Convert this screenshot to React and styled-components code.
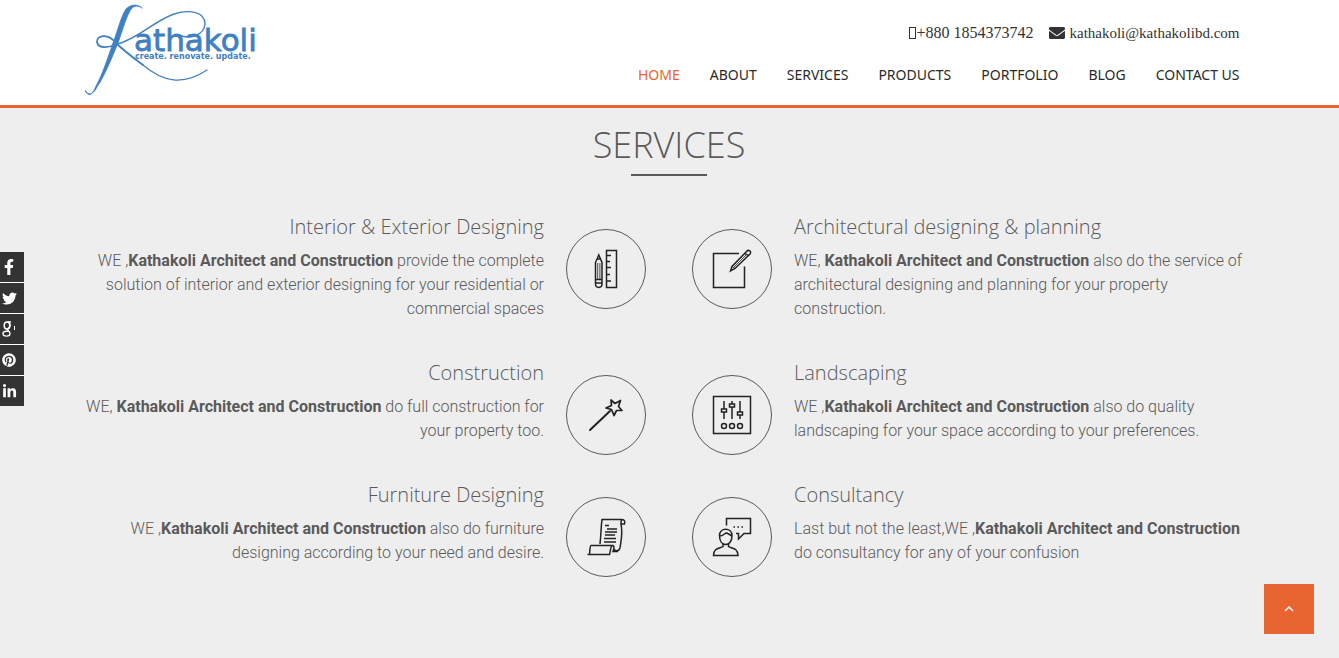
import React from "react";
import styled, { createGlobalStyle } from "styled-components";
import { FaFacebookF, FaTwitter, FaPinterest, FaLinkedinIn, FaEnvelope } from "react-icons/fa";

const colors = {
  accent: "#e86430",
  ink: "#333333",
  text: "#5a5a5a",
  page: "#eeeeee",
  brand: "#3f80c3",
};

const GlobalStyle = createGlobalStyle`
  *, *::before, *::after { box-sizing: border-box; }
  body {
    margin: 0;
    background: ${colors.page};
    color: ${colors.text};
    font-family: Roboto, "Liberation Sans", sans-serif;
    font-size: 16px;
    line-height: 24px;
  }
`;

const Header = styled.header`
  background: #ffffff;
  border-bottom: 3px solid ${colors.accent};
`;

const HeaderInner = styled.div`
  display: flex;
  justify-content: space-between;
  align-items: flex-start;
  max-width: 1170px;
  min-height: 105px;
  margin: 0 auto;
  padding-right: 15px;
`;

const LogoLink = styled.a`
  display: block;
  color: ${colors.brand};
`;

const LogoSvg = styled.svg`
  display: block;
`;

const HeaderRight = styled.div`
  display: flex;
  flex-direction: column;
  align-items: flex-end;
  gap: 18px;
  padding-top: 21px;
`;

const ContactList = styled.address`
  display: flex;
  gap: 16px;
  font: normal 16px/24px "Liberation Serif", serif;
`;

const ContactLink = styled.a`
  display: inline-flex;
  align-items: center;
  gap: ${(p) => p.$gap}px;
  color: ${colors.ink};
  font-size: ${(p) => p.$size}px;
  text-decoration: none;
`;

const PhoneGlyph = styled.span`
  width: 7px;
  height: 12px;
  border: 1px solid ${colors.ink};
`;

const Nav = styled.nav`
  display: flex;
  flex-wrap: wrap;
  gap: 30px;
`;

const NavLink = styled.a`
  color: ${(p) => (p.$active ? colors.accent : "#2a2a2a")};
  font: 400 14px/24px "Noto Sans", sans-serif;
  text-decoration: none;
`;

const Services = styled.main`
  max-width: 1171px;
  margin: 0 auto;
  padding: 16px 1px 40px 0;
`;

const Title = styled.h1`
  margin: 0;
  color: ${colors.text};
  font: 300 36px/42px "Open Sans", sans-serif;
  text-align: center;

  &::after {
    content: "";
    display: block;
    width: 76px;
    height: 2px;
    margin: 8px auto 0;
    background: ${colors.text};
  }
`;

const ServiceGrid = styled.div`
  display: grid;
  grid-template-columns: repeat(2, minmax(0, 1fr));
  gap: 40px 46px;
  margin-top: 39px;
`;

const ServiceItem = styled.article`
  display: flex;
  flex-direction: ${(p) => (p.$mirrored ? "row-reverse" : "row")};
  align-items: flex-start;
  gap: 22px;
  text-align: ${(p) => (p.$mirrored ? "right" : "left")};
`;

const IconCircle = styled.div`
  display: flex;
  flex: none;
  align-items: center;
  justify-content: center;
  width: 80px;
  height: 80px;
  margin: 14px 0 -46px;
  border: 1px solid ${colors.text};
  border-radius: 50%;
`;

const LineIcon = styled.svg`
  width: 40px;
  height: 40px;
  fill: none;
  stroke: #222222;
  stroke-width: 1.5;
`;

const ServiceText = styled.div`
  flex: 1;
  min-width: 0;
`;

const ServiceHeading = styled.h2`
  margin: 0 0 10px;
  font: 300 20px/24px "Open Sans", sans-serif;
`;

const ServiceCopy = styled.p`
  margin: 0;
  font-weight: 300;

  strong {
    font-weight: 700;
  }
`;

const SocialBar = styled.nav`
  position: fixed;
  top: 252px;
  left: 0;
  display: flex;
  flex-direction: column;
  gap: 1px;
  background: #ffffff;
`;

const SocialLink = styled.a`
  display: flex;
  align-items: center;
  justify-content: center;
  width: 24px;
  height: 30px;
  padding-right: 6px;
  background: ${colors.ink};
  color: #ffffff;
`;

const TopButton = styled.button`
  position: fixed;
  right: 25px;
  bottom: 24px;
  display: flex;
  align-items: center;
  justify-content: center;
  width: 50px;
  height: 50px;
  padding: 0;
  border: 0;
  background: ${colors.accent};
  color: #ffffff;
  cursor: pointer;
`;

function Logo() {
  return (
    <LogoSvg width="174" height="100" viewBox="0 0 174 100" role="img" aria-label="Kathakoli">
      <g fill="none" stroke="currentColor" strokeLinecap="round">
        <path
          fill="currentColor"
          strokeWidth="0.8"
          d="M57 8C53 4 46 4 41 9C36 16 33 30 28 43C23 57 17 76 11 86C7 96 3 97 0 90C2 94 7 97 12 87C18 79 27 58 33 43C38 29 42 14 47 8C51 5 55 6 57 8Z"
        />
        <path strokeWidth="1.8" d="M32 44C24 48 13 49 12 42C12 35 23 33 31 43C39 51 50 59 58 65" />
        <path strokeWidth="1.4" d="M32 44C51 40 69 21 89 14C105 9 120 12 120 24C119 35 105 40 94 35" />
        <path strokeWidth="1.2" d="M58 65C78 82 98 86 122 70" />
      </g>
      <g fill="currentColor" fontFamily="DejaVu Sans, sans-serif">
        <text x="49" y="51" fontSize="31" stroke="currentColor" strokeWidth="0.8">athakoli</text>
        <text x="50" y="59" fontSize="8" fontWeight="700">create. renovate. update.</text>
      </g>
    </LogoSvg>
  );
}

const PencilRuler = () => (
  <LineIcon viewBox="0 0 40 40" aria-hidden="true">
    <path d="M20.500 1.5H30.500V38.5H20.500ZM21 6.5h4M21 12.5h3M21 18.5h4M21 25.5h3M21 32h4" />
    <path d="M9.500 13.5L12.800 6L16 13.5V35C16 39.500 9.500 39.500 9.500 35ZM9.500 30.500h7M9.500 34h7M11 10h4" />
    <path strokeWidth="0.8" d="M11.700 14v16M13.900 14v16" />
  </LineIcon>
);

const DrawSquare = () => (
  <LineIcon viewBox="0 0 40 40" aria-hidden="true">
    <path d="M27 4.500H1.500V38.500H32.500V17.500" />
    <path d="M18.500 22L20 17.500L34.500 2.500C36.500 0 40 2.500 38 5L23 19.500ZM33 4L36.500 7" />
    <path strokeWidth="0.8" d="M20 17.500L23 19.500M22 18L34 6" />
  </LineIcon>
);

const Wand = () => (
  <LineIcon viewBox="0 0 40 40" aria-hidden="true">
    <path strokeWidth="2" strokeLinecap="round" d="M4 35L24 16" />
    <path strokeWidth="1.7" strokeLinejoin="round" d="M25 5L29 8.500L34.500 5.500L32.500 11.500L36 15.500H30.500L28 20.500L25.500 14.500L20 13L25.500 10.500Z" />
  </LineIcon>
);

const Sliders = () => (
  <LineIcon viewBox="0 0 40 40" aria-hidden="true">
    <path d="M1.500 1.500H38.500V38.500H1.500ZM12 6V14M12 17V24M20 6V9M20 12V24M28 6V17M28 20V24M9.500 14h5v3h-5ZM17.500 9h5v3h-5ZM25.500 17h5v3h-5Z" />
    <circle cx="12" cy="31" r="2.500" />
    <circle cx="20" cy="31" r="2.500" />
    <circle cx="28" cy="31" r="2.500" />
  </LineIcon>
);

const Scroll = () => (
  <LineIcon viewBox="0 0 40 40" aria-hidden="true">
    <path d="M14 27C15 18 15 10 16 2.500H36C39 2.500 39 5 38.500 7H35C35 5 35 3 36 2.500M35 7C37 17 35 24 34 31C33 34.500 29 34.500 28 32" />
    <path d="M1.500 37.500H23.500C24.500 34 24.500 30 26 28.500H5C3.500 29.500 4 34 3.500 37.500M26 28.500C29 28.500 28 32 27 34.500H32" />
    <path d="M19 8.500h4M21 12h10M19 15h12M19 18h10M18 21.500h12M18 25h12" />
  </LineIcon>
);

const Consult = () => (
  <LineIcon viewBox="0 0 40 40" aria-hidden="true">
    <path d="M14.500 8.500V1.500H38.500V16.500H32L26.500 22V16.500H24" />
    <path d="M7.500 18.500C7.500 10 20 10 20 18.500C20 24.500 17 27.500 13.800 27.500C10 27.500 7.500 24 7.500 18.500ZM7.500 19C12 19 12 16 15 16L20 19" />
    <path d="M11 26.500V29.500C8 31.500 1.500 30.500 1.500 38.500H26C26 30.500 19 31.500 16.500 29.500V26.500" />
    <path strokeDasharray="1.5 2.500" d="M21.500 10h10" />
  </LineIcon>
);

const GooglePlus = () => (
  <svg width="14" height="16" viewBox="0 0 14 16" fill="none" stroke="currentColor" aria-hidden="true">
    <ellipse cx="5" cy="4.500" rx="2.800" ry="3.500" strokeWidth="1.500" />
    <path strokeWidth="1.400" d="M5.500 1H9M7 1.500C9 4 8 6 6 7.500C4 9 8 10 8 12.500C8 16 1 16 1 12.500C1 10.500 4 10 6.500 10" />
    <path strokeWidth="1" d="M12.500 5V9" />
  </svg>
);

const company = <strong>Kathakoli Architect and Construction</strong>;

const services = [
  {
    title: "Interior & Exterior Designing",
    Icon: PencilRuler,
    copy: <>WE ,{company} provide the complete solution of interior and exterior designing for your residential or commercial spaces</>,
  },
  {
    title: "Architectural designing & planning",
    Icon: DrawSquare,
    copy: <>WE, {company} also do the service of architectural designing and planning for your property construction.</>,
  },
  {
    title: "Construction",
    Icon: Wand,
    copy: <>WE, {company} do full construction for your property too.</>,
  },
  {
    title: "Landscaping",
    Icon: Sliders,
    copy: <>WE ,{company} also do quality landscaping for your space according to your preferences.</>,
  },
  {
    title: "Furniture Designing",
    Icon: Scroll,
    copy: <>WE ,{company} also do furniture designing according to your need and desire.</>,
  },
  {
    title: "Consultancy",
    Icon: Consult,
    copy: <>Last but not the least,WE ,{company} do consultancy for any of your confusion</>,
  },
];

const navItems = ["HOME", "ABOUT", "SERVICES", "PRODUCTS", "PORTFOLIO", "BLOG", "CONTACT US"];

const socials = [
  { name: "Facebook", icon: <FaFacebookF size={16} /> },
  { name: "Twitter", icon: <FaTwitter size={15} /> },
  { name: "Google Plus", icon: <GooglePlus /> },
  { name: "Pinterest", icon: <FaPinterest size={14} /> },
  { name: "LinkedIn", icon: <FaLinkedinIn size={15} /> },
];

export default function App() {
  return (
    <>
      <GlobalStyle />
      <Header>
        <HeaderInner>
          <LogoLink href="#home" aria-label="Kathakoli">
            <Logo />
          </LogoLink>
          <HeaderRight>
            <ContactList>
              <ContactLink href="tel:+8801854373742" $gap={0} $size={16}>
                <PhoneGlyph />
                +880 1854373742
              </ContactLink>
              <ContactLink href="mailto:kathakoli@kathakolibd.com" $gap={4} $size={15}>
                <FaEnvelope size={16} />
                kathakoli@kathakolibd.com
              </ContactLink>
            </ContactList>
            <Nav aria-label="Main">
              {navItems.map((item, i) => (
                <NavLink key={item} href={`#${item.toLowerCase().replace(" ", "-")}`} $active={i === 0}>
                  {item}
                </NavLink>
              ))}
            </Nav>
          </HeaderRight>
        </HeaderInner>
      </Header>

      <Services>
        <Title>SERVICES</Title>
        <ServiceGrid>
          {services.map(({ title, Icon, copy }, i) => (
            <ServiceItem key={title} $mirrored={i % 2 === 0}>
              <IconCircle>
                <Icon />
              </IconCircle>
              <ServiceText>
                <ServiceHeading>{title}</ServiceHeading>
                <ServiceCopy>{copy}</ServiceCopy>
              </ServiceText>
            </ServiceItem>
          ))}
        </ServiceGrid>
      </Services>

      <SocialBar aria-label="Social">
        {socials.map(({ name, icon }) => (
          <SocialLink key={name} href={`#${name.toLowerCase().replace(" ", "-")}`} aria-label={name}>
            {icon}
          </SocialLink>
        ))}
      </SocialBar>

      <TopButton type="button" aria-label="Back to top" onClick={() => window.scrollTo({ top: 0, behavior: "smooth" })}>
        <svg width="10" height="6" viewBox="0 0 10 6" fill="none" stroke="currentColor" strokeWidth="1.500" aria-hidden="true">
          <path d="M1 5L5 1L9 5" />
        </svg>
      </TopButton>
    </>
  );
}
